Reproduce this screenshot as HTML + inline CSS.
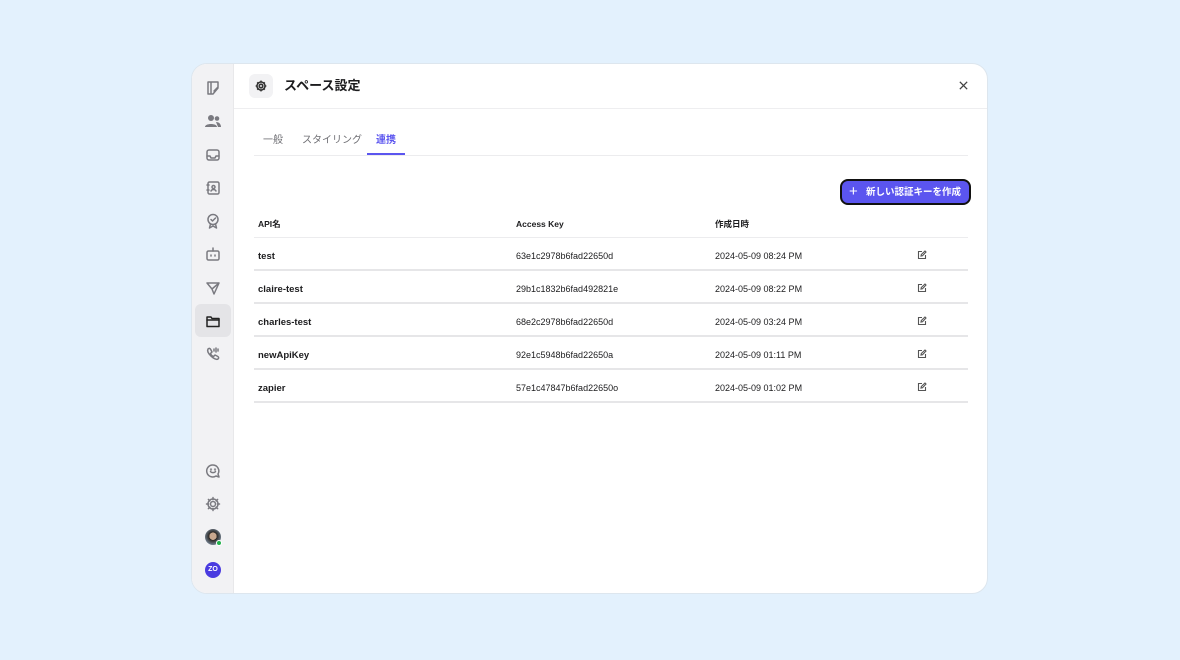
<!DOCTYPE html>
<html><head><meta charset="utf-8"><style>
*{box-sizing:border-box;margin:0;padding:0}
body{width:1180px;height:660px;background:#e3f1fd;font-family:"Liberation Sans","Noto Sans CJK JP",sans-serif;position:relative;overflow:hidden;color:#1c1c1e}
.card{position:absolute;left:191px;top:63px;width:797px;height:531px;background:#fff;border-radius:16px;overflow:hidden;border:1px solid #dde6ee}
.side{position:absolute;left:0;top:0;width:42px;height:100%;background:#f2f2f4;border-right:1px solid #e8e8ea}
.ic{position:absolute;left:12px;width:18px;height:18px}
.ic svg{width:18px;height:18px;fill:none;stroke:#7a7a80;stroke-width:1.5;stroke-linecap:round;stroke-linejoin:round}
.act{position:absolute;left:3px;top:240px;width:36px;height:33px;background:#e4e4e7;border-radius:6px}
.hdr{position:absolute;left:42px;top:0;right:0;height:45px;border-bottom:1px solid #eeeef0}
.gear{position:absolute;left:15px;top:10px;width:24px;height:24px;background:#f2f2f4;border-radius:6px}
.title{position:absolute;left:50px;top:13px;font-size:13px;font-weight:bold;line-height:18px}
.x{position:absolute;right:18px;top:16px}
.tabs{position:absolute;left:62px;top:66px;width:714px;height:26px;border-bottom:1px solid #ececee;font-size:10px;color:#6e6e73}
.tabs span{position:absolute;top:4px;line-height:14px}
.btn{position:absolute;left:648px;top:115px;width:131px;height:26px;background:#5b55ef;border:2px solid #111;border-radius:8px;color:#fff;font-size:9.5px;font-weight:bold;line-height:23px;padding-left:24px}
.btn b{position:absolute;left:7px;top:0;font-size:15px;font-weight:normal;line-height:22px}
.th{position:absolute;top:154px;font-size:8.5px;font-weight:bold;line-height:12px}
.row{position:absolute;left:62px;width:714px;height:33px;border-bottom:2px solid #e6e6e8;font-size:9px}
.row span{position:absolute;top:12px;line-height:12px}
.row .n{left:4px;font-weight:bold;font-size:9.5px;top:13px}
.row .k{left:262px}.row .d{left:461px}
.row svg{position:absolute;left:663px;top:12px;width:10px;height:10px;fill:none;stroke:#555;stroke-width:1.1}
</style></head><body>
<div class="card">
<div class="side">
<div class="act"></div>
<div class="ic" style="top:15px"><svg viewBox="0 0 18 18"><path d="M4 3h10v6l-5 6H4z M7 3v12 M10 12l4-4"/></svg></div>
<div class="ic" style="top:48px"><svg viewBox="0 0 18 18" style="fill:#7a7a80;stroke:none"><circle cx="7" cy="6" r="3"/><circle cx="13" cy="6.5" r="2.3"/><path d="M1 15c0-4 12-4 12 0z M12 10c3 0 5 2 5 5h-3z"/></svg></div>
<div class="ic" style="top:82px"><svg viewBox="0 0 18 18"><rect x="3" y="4" width="12" height="10" rx="2"/><path d="M3 10h3l1 2h4l1-2h3"/></svg></div>
<div class="ic" style="top:115px"><svg viewBox="0 0 18 18"><rect x="4" y="3" width="11" height="12" rx="1.5"/><circle cx="9.5" cy="8" r="1.5"/><path d="M7 12c1-2 4-2 5 0 M3 6h2 M3 11h2"/></svg></div>
<div class="ic" style="top:148px"><svg viewBox="0 0 18 18"><circle cx="9" cy="7.5" r="5"/><path d="M7 7.5l1.5 1.5 3-3 M6.5 12l-1 4 3.5-2 3.5 2-1-4"/></svg></div>
<div class="ic" style="top:181px"><svg viewBox="0 0 18 18"><rect x="3" y="6" width="12" height="9" rx="1.5"/><path d="M9 3v3 M7 10v1 M11 10v1"/></svg></div>
<div class="ic" style="top:215px"><svg viewBox="0 0 18 18"><path d="M3 4l12 0-5 11-2-5z M8 10l7-6"/></svg></div>
<div class="ic" style="top:248px"><svg viewBox="0 0 18 18" style="stroke:#222"><path d="M3 5h4l1 1.5h7v8H3z"/><path d="M3 8h12"/></svg></div>
<div class="ic" style="top:281px"><svg viewBox="0 0 18 18"><path d="M4 4c1-1 2-1 3 1l1 2-1.5 1.5c.5 1.5 1.5 2.5 3 3L11 10l2 1c2 1 2 2 1 3-3 2-12-6-10-10z M12 3v4 M14 4v2 M10 4v2"/></svg></div>
<div class="ic" style="top:398px"><svg viewBox="0 0 18 18"><path d="M9 3a6 6 0 1 0 3 11l3 1-1-3A6 6 0 0 0 9 3z M6.5 9.5c1 1.5 4 1.5 5 0"/><circle cx="7" cy="7.5" r=".4"/><circle cx="11" cy="7.5" r=".4"/></svg></div>
<div class="ic" style="top:431px"><svg viewBox="0 0 18 18"><circle cx="9" cy="9" r="2.5"/><path d="M9 2.5v2 M9 13.5v2 M2.5 9h2 M13.5 9h2 M4.4 4.4l1.4 1.4 M12.2 12.2l1.4 1.4 M4.4 13.6l1.4-1.4 M12.2 5.8l1.4-1.4"/><circle cx="9" cy="9" r="5"/></svg></div>
<div style="position:absolute;left:13px;top:465px;width:16px;height:16px;border-radius:50%;background:radial-gradient(circle at 50% 45%,#c9a88f 0 30%,#2a2622 32%,#6d7a88 70%)"></div>
<div style="position:absolute;left:24px;top:476px;width:6px;height:6px;border-radius:50%;background:#22b14c;border:1px solid #fff"></div>
<div style="position:absolute;left:13px;top:498px;width:16px;height:16px;border-radius:50%;background:#4a3be0;color:#fff;font-size:7px;font-weight:bold;text-align:center;line-height:16px">ZO</div>
</div>
<div class="hdr">
<div class="gear"><svg viewBox="0 0 18 18" style="position:absolute;left:4px;top:4px;width:16px;height:16px;fill:none;stroke:#333;stroke-width:1.8"><circle cx="9" cy="9" r="2"/><circle cx="9" cy="9" r="4.5"/><path d="M9 3v1.5 M9 13.5v1.5 M3 9h1.5 M13.5 9h1.5 M4.8 4.8l1 1 M12.2 12.2l1 1 M4.8 13.2l1-1 M12.2 5.8l1-1"/></svg></div>
<div class="title">スペース設定</div>
<svg class="x" width="11" height="11" viewBox="0 0 12 12" style="stroke:#444;stroke-width:1.4"><path d="M2 2l8 8M10 2l-8 8"/></svg>
</div>
<div class="tabs"><span style="left:9px">一般</span><span style="left:48px">スタイリング</span><span style="left:122px;color:#5b55ef;font-weight:bold">連携</span><div style="position:absolute;left:113px;top:23px;width:38px;height:2px;background:#5b55ef"></div></div>
<div class="btn"><b>+</b>新しい認証キーを作成</div>
<div class="th" style="left:66px">API名</div>
<div class="th" style="left:324px">Access Key</div>
<div class="th" style="left:523px">作成日時</div>
<div style="position:absolute;left:62px;top:173px;width:714px;border-top:1px solid #ececee"></div>
<div class="row" style="top:174px"><span class="n">test</span><span class="k">63e1c2978b6fad22650d</span><span class="d">2024-05-09 08:24 PM</span><svg viewBox="0 0 10 10"><path d="M5 1.5H1.5v7h7V5 M4 6l.3-1.5L8 1l1 1-3.5 3.7z"/></svg></div>
<div class="row" style="top:207px"><span class="n">claire-test</span><span class="k">29b1c1832b6fad492821e</span><span class="d">2024-05-09 08:22 PM</span><svg viewBox="0 0 10 10"><path d="M5 1.5H1.5v7h7V5 M4 6l.3-1.5L8 1l1 1-3.5 3.7z"/></svg></div>
<div class="row" style="top:240px"><span class="n">charles-test</span><span class="k">68e2c2978b6fad22650d</span><span class="d">2024-05-09 03:24 PM</span><svg viewBox="0 0 10 10"><path d="M5 1.5H1.5v7h7V5 M4 6l.3-1.5L8 1l1 1-3.5 3.7z"/></svg></div>
<div class="row" style="top:273px"><span class="n">newApiKey</span><span class="k">92e1c5948b6fad22650a</span><span class="d">2024-05-09 01:11 PM</span><svg viewBox="0 0 10 10"><path d="M5 1.5H1.5v7h7V5 M4 6l.3-1.5L8 1l1 1-3.5 3.7z"/></svg></div>
<div class="row" style="top:306px"><span class="n">zapier</span><span class="k">57e1c47847b6fad22650o</span><span class="d">2024-05-09 01:02 PM</span><svg viewBox="0 0 10 10"><path d="M5 1.5H1.5v7h7V5 M4 6l.3-1.5L8 1l1 1-3.5 3.7z"/></svg></div>
</div>
</body></html>
